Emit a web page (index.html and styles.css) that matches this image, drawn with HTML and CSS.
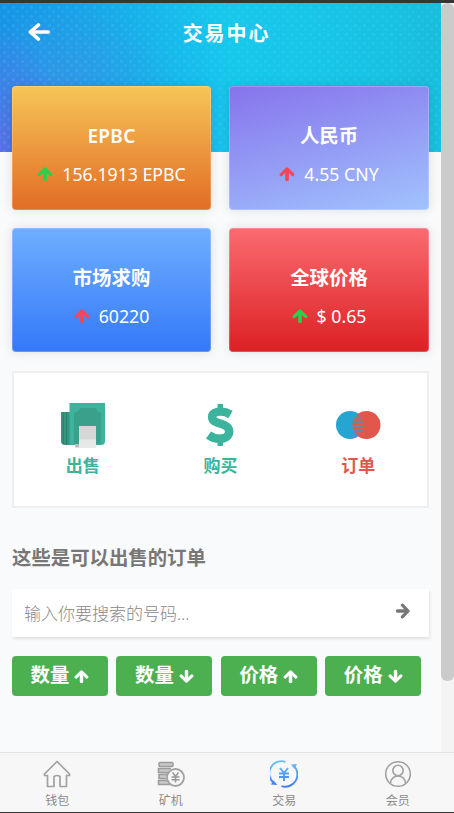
FILE: index.html
```html
<!DOCTYPE html>
<html lang="zh-CN">
<head>
<meta charset="utf-8">
<title>交易中心</title>
<link rel="stylesheet" href="styles.css">
</head>
<body>
<svg width="0" height="0" class="defs">
  <symbol id="arrow" viewBox="0 0 16 16"><path d="M2.200 8.600 8 2.900l5.800 5.700" fill="none" stroke="currentColor" stroke-width="3.200" stroke-linecap="round" stroke-linejoin="round"/><path d="M8 4v9.300" fill="none" stroke="currentColor" stroke-width="3.700" stroke-linecap="round"/></symbol>
</svg>
<div class="app">
  <div class="viewport">
    <div class="page">
      <header class="hero">
        <svg class="back" viewBox="0 0 22 20"><path d="M10.500 3.500 3 10l7.500 6.500M3.500 10H19.500" fill="none" stroke="#fff" stroke-width="3.300" stroke-linecap="round" stroke-linejoin="round"/></svg>
        <h1>交易中心</h1>
      </header>
      <main>
        <section class="cards">
          <div class="card gold"><h2 class="latin">EPBC</h2><p><svg class="up green"><use href="#arrow"/></svg><span>156.1913 EPBC</span></p></div>
          <div class="card violet"><h2>人民币</h2><p><svg class="up red"><use href="#arrow"/></svg><span>4.55 CNY</span></p></div>
          <div class="card blue"><h2>市场求购</h2><p><svg class="up red"><use href="#arrow"/></svg><span>60220</span></p></div>
          <div class="card crimson"><h2>全球价格</h2><p><svg class="up green"><use href="#arrow"/></svg><span>$ 0.65</span></p></div>
        </section>
        <section class="actions">
          <div class="action">
            <svg viewBox="0 0 46 46"><path d="M1 10h9v33H5q-4 0-4-4z" fill="#36957f"/><path d="M3.500 10v32M6.500 10v33" stroke="#2c7f6e"/><path d="M9.500 1H45v38q0 4-4 4H9.500z" fill="#3cb39c"/><path d="M20 6h16q0 4 5 5v31H14V11q5-1 6-5z" fill="#38a08b"/><path d="M15 42h4v3.500h-4z" fill="#b9bdbc"/><path d="M19 24h17v21.500H19z" fill="#d6d8d7"/><path d="M19 37.500h17v8H19z" fill="#e7e8e8"/></svg>
            <span>出售</span>
          </div>
          <div class="action">
            <svg viewBox="0 0 46 46"><path d="M33.500 12.500C29 9.800 24 9 20 10c-6.500 1.600-6.500 8.200 0 10.500l6 2c8.500 3 8 12 .5 13.800C21 37.300 15.500 36 11.500 33" fill="none" stroke="#3cb39c" stroke-width="8.500"/><path d="M20.500 2h5.500v8h-5.500zM20.500 36h5.500v8h-5.500z" fill="#3cb39c"/></svg>
            <span>购买</span>
          </div>
          <div class="action order">
            <svg viewBox="0 0 46 46"><circle cx="15" cy="23" r="14" fill="#27a5d2"/><circle cx="31.500" cy="23" r="14" fill="#e2574c"/><path d="M21 14h4M19 17.500h8.500M18 21h10M18 24.500h10M18.500 28h9.500M20.500 31.500h5" stroke="#598fa8" stroke-width="1.500"/></svg>
            <span>订单</span>
          </div>
        </section>
        <h3>这些是可以出售的订单</h3>
        <div class="search"><span>输入你要搜索的号码...</span><svg class="right"><use href="#arrow"/></svg></div>
        <div class="filters">
          <div class="btn">数量<svg><use href="#arrow"/></svg></div>
          <div class="btn">数量<svg class="down"><use href="#arrow"/></svg></div>
          <div class="btn">价格<svg><use href="#arrow"/></svg></div>
          <div class="btn">价格<svg class="down"><use href="#arrow"/></svg></div>
        </div>
      </main>
    </div>
    <div class="scrollbar"><div class="thumb"></div></div>
  </div>
  <nav>
    <div class="tab"><svg viewBox="0 0 28 28"><path d="M14 1.500 1.500 14v1.500h3v11h6.500v-10q3-2 6 0v10h6.500v-11h3V14z" fill="none" stroke="#a2a2a4" stroke-width="1.700" stroke-linejoin="round"/></svg><span>钱包</span></div>
    <div class="tab"><svg viewBox="0 0 28 28"><g fill="#c9c9ca" stroke="#9b9b9d" stroke-width="1.500"><rect x="2" y="2.500" width="14" height="4" rx="1"/><path d="M14 8.500H1.500v4H11M11 14.500H2v4h7M10 20.500H1.500v4H13"/></g><circle cx="18.500" cy="17.500" r="8.500" fill="#f7f7f8" stroke="#a2a2a4" stroke-width="1.800"/><path d="m15.500 12.500 3 4 3-4M18.500 16.500v6M14.500 17h8M14.500 19.800h8" fill="none" stroke="#999" stroke-width="1.500"/></svg><span>矿机</span></div>
    <div class="tab"><svg viewBox="0 0 28 28"><defs><linearGradient id="ring" gradientUnits="userSpaceOnUse" x1="0" y1="0" x2="0" y2="28"><stop stop-color="#6bc4f8"/><stop offset="1" stop-color="#3d78f5"/></linearGradient></defs><g fill="none" stroke="url(#ring)" stroke-width="1.900"><path d="M15.500 1.800A12.300 12.300 0 0 0 3.800 23M24.500 6.500A12.300 12.300 0 0 1 11.500 26.200"/><path d="m10 8 4 5 4-5M14 12.500V21M9 13.500h10M9 17h10"/></g><path d="m21 4.500 6-.5-2.500 5zM1 24.500l2.500-4 4 4.500z" fill="url(#ring)"/></svg><span>交易</span></div>
    <div class="tab"><svg viewBox="0 0 28 28"><g fill="none" stroke="#a2a2a4" stroke-width="1.600"><circle cx="14" cy="14" r="12.300"/><circle cx="14" cy="10.500" r="5.200"/><path d="M6.500 23.500c0-10 15-10 15 0"/></g></svg><span>会员</span></div>
  </nav>
</div>
</body>
</html>
```
FILE: styles.css
```css
* { box-sizing: border-box; margin: 0; padding: 0; }
body { font-family: "Noto Sans", "Noto Sans CJK SC", sans-serif; color: #777; overflow: hidden; }
svg { display: block; flex: none; }
.defs { position: absolute; }
.app { height: 813px; display: flex; flex-direction: column; border-top: 3px solid #363636; border-bottom: 1px solid #363636; background: #f7f7f8; }
.viewport { display: flex; height: 749px; }
.page { width: 441px; background: #f9fafc; }
.scrollbar { width: 13px; background: #f4f4f4; }
.thumb { height: 678px; background: #cbcbcb; border-radius: 6px; }

.hero {
  height: 149px;
  padding: 17px 15px 17px 27px;
  display: grid;
  grid-template-columns: 24px 1fr 24px;
  align-items: start;
  background:
    radial-gradient(circle, #63dcf22b 1px, transparent 2px) 0 0 / 9px 9px,
    radial-gradient(circle, #63dcf21f 1px, transparent 2px) 4px 4px / 9px 9px,
    radial-gradient(ellipse 65px 125px at 0 100%, #5b6fe8 0, #5b6fe800 100%),
    radial-gradient(ellipse 110px 80px at 60px 80px, #3e94e6aa 0, #3e94e600 100%),
    linear-gradient(80deg, #168fe5 0, #18a6e9 24%, #17c8ed 53%, #18c6e9 70%, #19bddc 100%);
}
.back { width: 24px; height: 22px; margin-top: 1px; }
h1 { font-size: 20px; line-height: 27px; letter-spacing: 1.9px; text-align: center; color: #fff; }

main { margin-top: -66px; padding: 0 12px; }
.cards { display: grid; grid-template-columns: 199px 200px; gap: 18px; }
.card { height: 124px; padding-top: 35px; border-radius: 4px; color: #fff; text-align: center; box-shadow: 0 0 12px #0000001c; border: 1px solid #ffffff38; background-origin: border-box; }
.card h2 { font-size: 19.4px; line-height: 28px; }
.card h2.latin { font-size: 19px; font-weight: 600; letter-spacing: .3px; }
.card p { margin-top: 10px; display: flex; justify-content: center; align-items: center; gap: 9px; font-size: 17.700px; line-height: 28px; white-space: nowrap; }
.up { width: 16px; height: 16px; }
.green { color: #2dce4c; }
.red { color: #fb4458; }
.gold { background-image: linear-gradient(#f7c557, #e26c25); }
.violet { background-image: linear-gradient(165deg, #8673ec, #a1c3fd); }
.blue { background-image: linear-gradient(#6eafff, #3478f8); }
.crimson { background-image: linear-gradient(#fa6b70, #dc2024); }

.actions { height: 137px; margin-top: 19px; width: 417px; border: 2px solid #efefef; background: #fff; display: grid; grid-template-columns: repeat(3, 1fr); padding-top: 29px; }
.action { display: flex; flex-direction: column; align-items: center; color: #3cb39c; font-size: 17px; font-weight: 700; line-height: 26px; }
.action svg { width: 46px; height: 46px; margin-bottom: 5px; }
.order { color: #e2574c; }

h3 { margin-top: 36px; font-size: 19.4px; line-height: 28px; color: #777; }
.search { margin-top: 17px; width: 417px; height: 48px; background: #fff; box-shadow: 1px 2px 3px #0000001a; padding: 0 18px 2px 12px; display: flex; align-items: center; justify-content: space-between; font-size: 17px; font-weight: 300; color: #888; }
.right { width: 16px; height: 16px; transform: rotate(90deg); color: #777; margin-top: -3px; }
.filters { margin-top: 19px; display: flex; gap: 8.4px; }
.btn { width: 96px; height: 40px; background: #4caf50; border-radius: 4px; color: #fff; font-size: 19.4px; font-weight: 700; line-height: 38px; display: flex; justify-content: center; gap: 5px; }
.btn svg { width: 15px; height: 15px; margin-top: 12.5px; }
.btn .down { transform: rotate(180deg); }

nav { height: 60px; border-top: 1px solid #e3e3e5; background: #f7f7f8; display: grid; grid-template-columns: repeat(4, 1fr); padding-top: 7px; }
.tab { display: flex; flex-direction: column; align-items: center; font-size: 12px; line-height: 18px; color: #8c8c8c; padding-left: 1px; }
.tab svg { width: 28px; height: 28px; margin-bottom: 4px; }
```
